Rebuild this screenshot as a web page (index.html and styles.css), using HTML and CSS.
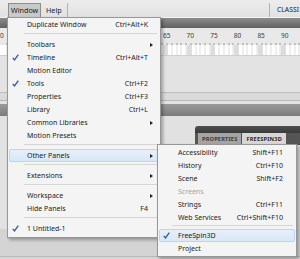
FILE: index.html
```html
<!DOCTYPE html>
<html>
	<head>
		<meta charset="UTF-8">
		<title>Window menu</title>
		<link rel="stylesheet" href="styles.css">
	</head>
	<body>
		<!--application behind the menu-->
		<div id="app">
			<div class="menubar">
				<span class="mb-item mb-window active">Window</span>
				<span class="mb-item mb-help">Help</span>
				<span class="mb-sep"></span>
				<span class="mb-fill"></span>
				<span class="mb-sep"></span>
				<span class="mb-ws">CLASSI</span>
			</div>
			<div class="tl-head"></div>
			<div class="ruler">
				<span class="left-num">0</span>
				<div class="nums">
					<span>65</span><span>70</span><span>75</span><span>80</span><span>85</span><span>90</span>
				</div>
			</div>
			<div class="ticks"></div>
			<div class="frames"></div>
			<div class="stage"></div>
			<div class="band"></div>
			<div class="gap"></div>
			<div class="darkbar"></div>
			<div class="gap2"></div>
			<div class="panel-row">
				<div class="panel">
					<div class="panel-head"></div>
					<div class="tabs">
						<span class="tab">PROPERTIES</span>
						<span class="tab on">FREESPIN3D</span>
					</div>
					<div class="panel-body"></div>
				</div>
			</div>
			<div class="bottom"></div>
		</div>

		<!--window menu-->
		<ul class="menu main">
			<li class="item"><span class="chk"></span><span class="lbl">Duplicate Window</span><span class="key">Ctrl+Alt+K</span><span class="arr"></span></li>
			<li class="sep"></li>
			<li class="item"><span class="chk"></span><span class="lbl">Toolbars</span><span class="key"></span><span class="arr"><i></i></span></li>
			<li class="item"><span class="chk"><svg width="7" height="7" viewBox="0 0 7 7"><path d="M0.7 3.9 L2.5 5.9 L6.3 0.7" fill="none" stroke="#2d5a9c" stroke-width="1.3"/></svg></span><span class="lbl">Timeline</span><span class="key">Ctrl+Alt+T</span><span class="arr"></span></li>
			<li class="item"><span class="chk"></span><span class="lbl">Motion Editor</span><span class="key"></span><span class="arr"></span></li>
			<li class="item"><span class="chk"><svg width="7" height="7" viewBox="0 0 7 7"><path d="M0.7 3.9 L2.5 5.9 L6.3 0.7" fill="none" stroke="#2d5a9c" stroke-width="1.3"/></svg></span><span class="lbl">Tools</span><span class="key">Ctrl+F2</span><span class="arr"></span></li>
			<li class="item"><span class="chk"></span><span class="lbl">Properties</span><span class="key">Ctrl+F3</span><span class="arr"></span></li>
			<li class="item"><span class="chk"></span><span class="lbl">Library</span><span class="key">Ctrl+L</span><span class="arr"></span></li>
			<li class="item"><span class="chk"></span><span class="lbl">Common Libraries</span><span class="key"></span><span class="arr"><i></i></span></li>
			<li class="item"><span class="chk"></span><span class="lbl">Motion Presets</span><span class="key"></span><span class="arr"></span></li>
			<li class="sep"></li>
			<li class="item hl"><span class="chk"></span><span class="lbl">Other Panels</span><span class="key"></span><span class="arr"><i></i></span></li>
			<li class="sep"></li>
			<li class="item"><span class="chk"></span><span class="lbl">Extensions</span><span class="key"></span><span class="arr"><i></i></span></li>
			<li class="sep"></li>
			<li class="item"><span class="chk"></span><span class="lbl">Workspace</span><span class="key"></span><span class="arr"><i></i></span></li>
			<li class="item"><span class="chk"></span><span class="lbl">Hide Panels</span><span class="key">F4</span><span class="arr"></span></li>
			<li class="sep"></li>
			<li class="item"><span class="chk"><svg width="7" height="7" viewBox="0 0 7 7"><path d="M0.7 3.9 L2.5 5.9 L6.3 0.7" fill="none" stroke="#2d5a9c" stroke-width="1.3"/></svg></span><span class="lbl">1 Untitled-1</span><span class="key"></span><span class="arr"></span></li>
		</ul>

		<!--other panels submenu-->
		<ul class="menu sub">
			<li class="item"><span class="chk"></span><span class="lbl">Accessibility</span><span class="key">Shift+F11</span><span class="arr"></span></li>
			<li class="item"><span class="chk"></span><span class="lbl">History</span><span class="key">Ctrl+F10</span><span class="arr"></span></li>
			<li class="item"><span class="chk"></span><span class="lbl">Scene</span><span class="key">Shift+F2</span><span class="arr"></span></li>
			<li class="item off"><span class="chk"></span><span class="lbl">Screens</span><span class="key"></span><span class="arr"></span></li>
			<li class="item"><span class="chk"></span><span class="lbl">Strings</span><span class="key">Ctrl+F11</span><span class="arr"></span></li>
			<li class="item"><span class="chk"></span><span class="lbl">Web Services</span><span class="key">Ctrl+Shift+F10</span><span class="arr"></span></li>
			<li class="sep"></li>
			<li class="item hl"><span class="chk"><svg width="7" height="7" viewBox="0 0 7 7"><path d="M0.7 3.9 L2.5 5.9 L6.3 0.7" fill="none" stroke="#2d5a9c" stroke-width="1.3"/></svg></span><span class="lbl">FreeSpin3D</span><span class="key"></span><span class="arr"></span></li>
			<li class="item"><span class="chk"></span><span class="lbl">Project</span><span class="key"></span><span class="arr"></span></li>
		</ul>
	</body>
</html>
```

FILE: styles.css
```css
html,body,ul,li{
	margin: 0;
	padding: 0;
}
li{
	list-style: none;
}
body{
	position: relative;
	width: 300px;
	height: 259px;
	overflow: hidden;
	background: #d5d5d5;
	font-family: "Noto Sans", "Open Sans", sans-serif;
	color: #1e1e1e;
}

/*menu bar*/
.menubar{
	display: flex;
	align-items: flex-end;
	height: 17px;
	padding-left: 8px;
	box-sizing: border-box;
	background: linear-gradient(#ececec, #e2e2e2);
	font-size: 7.2px;
	color: #222;
}
.mb-item{
	height: 14px;
	line-height: 13px;
	box-sizing: border-box;
	border: 1px solid transparent;
	border-bottom: 0;
}
.mb-window{
	width: 33px;
	padding-left: 2px;
}
.mb-window.active{
	background: #c9c9c9;
	border-color: #8e8e8e;
}
.mb-help{
	width: 26px;
	padding-left: 4px;
}
.mb-sep{
	width: 1px;
	height: 14px;
	background: #b4b4b4;
}
.mb-fill{
	flex: 1;
}
.mb-ws{
	width: 30px;
	height: 14px;
	line-height: 13px;
	padding-left: 7px;
	box-sizing: border-box;
	white-space: nowrap;
	font-size: 6.8px;
}

/*timeline*/
.tl-head{
	height: 11px;
	background: linear-gradient(#8c8c8c, #626262);
	border-top: 1px solid #f4f4f4;
	box-sizing: border-box;
}
.ruler{
	display: flex;
	height: 15px;
	background: #e9e9e9;
	font-size: 6.5px;
	line-height: 16px;
	color: #3a3a3a;
}
.left-num{
	width: 3px;
}
.nums{
	display: flex;
	padding-left: 160px;
}
.nums span{
	width: 23.6px;
}
.ticks{
	height: 2px;
	background: #e9e9e9 repeating-linear-gradient(90deg, transparent 0 3.72px, #9a9a9a 3.72px 4.72px);
	background-position: 2.5px 0;
}
.frames{
	height: 10px;
	background:
		repeating-linear-gradient(90deg, transparent 0 18.88px, #dcdcdc 18.88px 23.6px),
		repeating-linear-gradient(90deg, #fff 0 3.72px, #dedede 3.72px 4.72px);
	background-position: 2.8px 0, 2.5px 0;
	border-bottom: 1px solid #cfcfcf;
}
.stage{
	height: 36px;
	background: #e3e3e3;
	border-bottom: 1px solid #bdbdbd;
}
.band{
	height: 7px;
	background: #dadada;
	border-bottom: 1px solid #b8b8b8;
}
.gap{
	height: 3px;
	background: #e2e2e2;
}
.darkbar{
	height: 12px;
	background: linear-gradient(#9a9a9a, #7c7c7c);
}
.gap2{
	height: 10px;
	background: #e1e1e1;
}

/*panel with tabs*/
.panel-row{
	height: 103px;
	background: #e1e1e1;
}
.panel{
	margin-left: 195px;
	height: 100%;
	display: flex;
	flex-direction: column;
}
.panel-head{
	height: 7px;
	background: linear-gradient(#505050, #3a3a3a);
	border-top-left-radius: 3px;
}
.tabs{
	display: flex;
	height: 12px;
	padding-left: 3px;
	gap: 1px;
	background: #555;
}
.tab{
	padding: 0 4px;
	font-size: 5.6px;
	font-weight: bold;
	line-height: 12px;
	letter-spacing: .2px;
	background: #a4a4a4;
	color: #3b3b3b;
}
.tab.on{
	background: #d7d7d7;
	color: #2a2a2a;
}
.panel-body{
	flex: 1;
	background: #d9d9d9;
}
.bottom{
	height: 27px;
	background: #d4d4d4;
	border-bottom: 1px solid #b9b9b9;
}

/*drop down menus*/
.menu{
	position: absolute;
	box-sizing: border-box;
	padding: 0 1px 2px;
	background: #f4f4f4;
	border: 1px solid #979797;
	box-shadow: 2px 2px 3px rgba(0,0,0,.3);
	font-size: 7px;
	color: #1b1b1b;
}
.main{
	left: 7px;
	top: 17px;
	width: 154px;
}
.sub{
	left: 157px;
	top: 144px;
	width: 140px;
	padding-top: 1px;
	padding-bottom: 1px;
}
.item{
	display: grid;
	grid-template-columns: 17px 1fr auto 10px;
	align-items: center;
	height: 13px;
	box-sizing: border-box;
	border: 1px solid transparent;
	border-radius: 2px;
	white-space: nowrap;
}
.sub .item{
	grid-template-columns: 18px 1fr auto 11px;
}
.item.hl{
	background: linear-gradient(#e6f0fb, #d8e7f7);
	border-color: #bcd6f1;
}
.item.off{
	color: #a3a3a3;
}
.chk{
	display: flex;
	padding-left: 2px;
}
.sub .chk{
	padding-left: 3px;
}
.arr i{
	display: block;
	width: 0;
	height: 0;
	margin-left: 2px;
	border-left: 3px solid #222;
	border-top: 2.5px solid transparent;
	border-bottom: 2.5px solid transparent;
}
.sep{
	height: 5px;
	position: relative;
}
.sub .sep{
	height: 4px;
}
.sep:after{
	content: "";
	display: block;
	height: 1px;
	margin: 2px 2px 0 15px;
	background: #d6d6d6;
}
.sub .sep:after{
	margin: 1px 2px 0 13px;
}
```
